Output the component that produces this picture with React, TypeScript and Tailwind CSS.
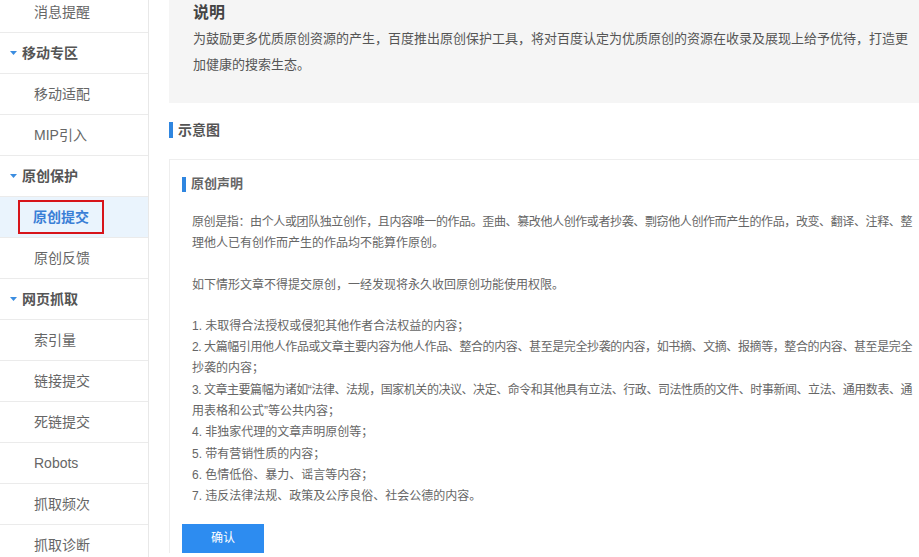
const font = { fontFamily: '"Liberation Sans", "Noto Sans CJK SC", sans-serif' };

type NavItem = { label: string; group?: boolean; active?: boolean };

const navItems: NavItem[] = [
  { label: "消息提醒" },
  { label: "移动专区", group: true },
  { label: "移动适配" },
  { label: "MIP引入" },
  { label: "原创保护", group: true },
  { label: "原创提交", active: true },
  { label: "原创反馈" },
  { label: "网页抓取", group: true },
  { label: "索引量" },
  { label: "链接提交" },
  { label: "死链提交" },
  { label: "Robots" },
  { label: "抓取频次" },
  { label: "抓取诊断" },
];

function Caret() {
  return (
    <svg width="7" height="4" viewBox="0 0 7 4" className="shrink-0">
      <polygon points="0,0 7,0 3.5,4" fill="#3b8de0" />
    </svg>
  );
}

function Sidebar() {
  return (
    <div className="w-[149px] shrink-0 border-r border-[#e8e8e8] h-full overflow-hidden">
      <ul className="-mt-[8px]">
        {navItems.map((item, idx) => (
          <li
            key={idx}
            className={
              "h-[41px] border-b border-[#ebebeb] flex items-center text-[14px] " +
              (item.active ? "bg-[#eaf4fd] pl-[18px]" : item.group ? "pl-[10px]" : "pl-[34px]")
            }
          >
            {item.group ? (
              <div className="flex items-center gap-[5px] font-bold text-[#555]">
                <Caret />
                <span>{item.label}</span>
              </div>
            ) : item.active ? (
              <span className="h-[34px] px-[13px] border-2 border-[#d7141a] flex items-center font-bold text-[#3a7fd6]">
                {item.label}
              </span>
            ) : (
              <span className="text-[#666]">{item.label}</span>
            )}
          </li>
        ))}
      </ul>
    </div>
  );
}

// one visual line, stretched like justified text
function Line({ children, className = "" }: { children: React.ReactNode; className?: string }) {
  return (
    <span className={"block whitespace-nowrap [text-align-last:justify] text-justify " + className}>
      {children}
    </span>
  );
}

function Notice() {
  return (
    <div className="border-t border-l border-[#eeeeee] pl-[12px] pt-[14px] pr-[7px]">
      {/* Card title */}
      <div className="h-[20px] flex items-center gap-[5px]">
        <span className="w-[4px] h-[15px] bg-[#2f86e0]"></span>
        <span className="text-[13px] font-bold text-[#666]">原创声明</span>
      </div>

      <div className="mt-[18px] pl-[10px] text-[12px] leading-[21.3px] text-[#666]">
        <p className="mb-5">
          <Line className="tracking-[-0.42px]">
            原创是指：由个人或团队独立创作，且内容唯一的作品。歪曲、篡改他人创作或者抄袭、剽窃他人创作而产生的作品，改变、翻译、注释、整
          </Line>
          理他人已有创作而产生的作品均不能算作原创。
        </p>
        <p className="mb-5">如下情形文章不得提交原创，一经发现将永久收回原创功能使用权限。</p>
        <div>
          <div>1. 未取得合法授权或侵犯其他作者合法权益的内容；</div>
          <div>
            <Line className="tracking-[-0.45px]">
              2. 大篇幅引用他人作品或文章主要内容为他人作品、整合的内容、甚至是完全抄袭的内容，如书摘、文摘、报摘等，整合的内容、甚至是完全
            </Line>
            抄袭的内容；
          </div>
          <div>
            <Line className="tracking-[-0.5px]">
              3. 文章主要篇幅为诸如“法律、法规，国家机关的决议、决定、命令和其他具有立法、行政、司法性质的文件、时事新闻、立法、通用数表、通
            </Line>
            用表格和公式”等公共内容；
          </div>
          <div>4. 非独家代理的文章声明原创等；</div>
          <div>5. 带有营销性质的内容；</div>
          <div>6. 色情低俗、暴力、谣言等内容；</div>
          <div>7. 违反法律法规、政策及公序良俗、社会公德的内容。</div>
        </div>
      </div>

      <button className="mt-[16px] w-[82px] h-[29px] bg-[#2d8cf0] text-white text-[12px] flex items-center justify-center">
        确认
      </button>
    </div>
  );
}

export default function App() {
  return (
    <div className="w-full h-[557px] flex bg-white overflow-hidden" style={font}>
      <Sidebar />

      <main className="flex-1 min-w-0 pl-[20px]">
        {/* Description */}
        <section className="bg-[#f5f5f5] pl-6 pr-[11px] pb-[25px]">
          <h2 className="text-[16px] leading-[26px] font-bold text-[#444]">说明</h2>
          <p className="text-[13px] leading-[26px] text-[#555]">
            <Line>
              为鼓励更多优质原创资源的产生，百度推出原创保护工具，将对百度认定为优质原创的资源在收录及展现上给予优待，打造更
            </Line>
            加健康的搜索生态。
          </p>
        </section>

        {/* Illustration heading */}
        <div className="mt-[17px] h-[20px] flex items-center gap-[5px]">
          <span className="w-[4px] h-[16px] bg-[#2f86e0]"></span>
          <span className="text-[14px] font-bold text-[#555]">示意图</span>
        </div>

        <div className="mt-[19px]">
          <Notice />
        </div>
      </main>
    </div>
  );
}
